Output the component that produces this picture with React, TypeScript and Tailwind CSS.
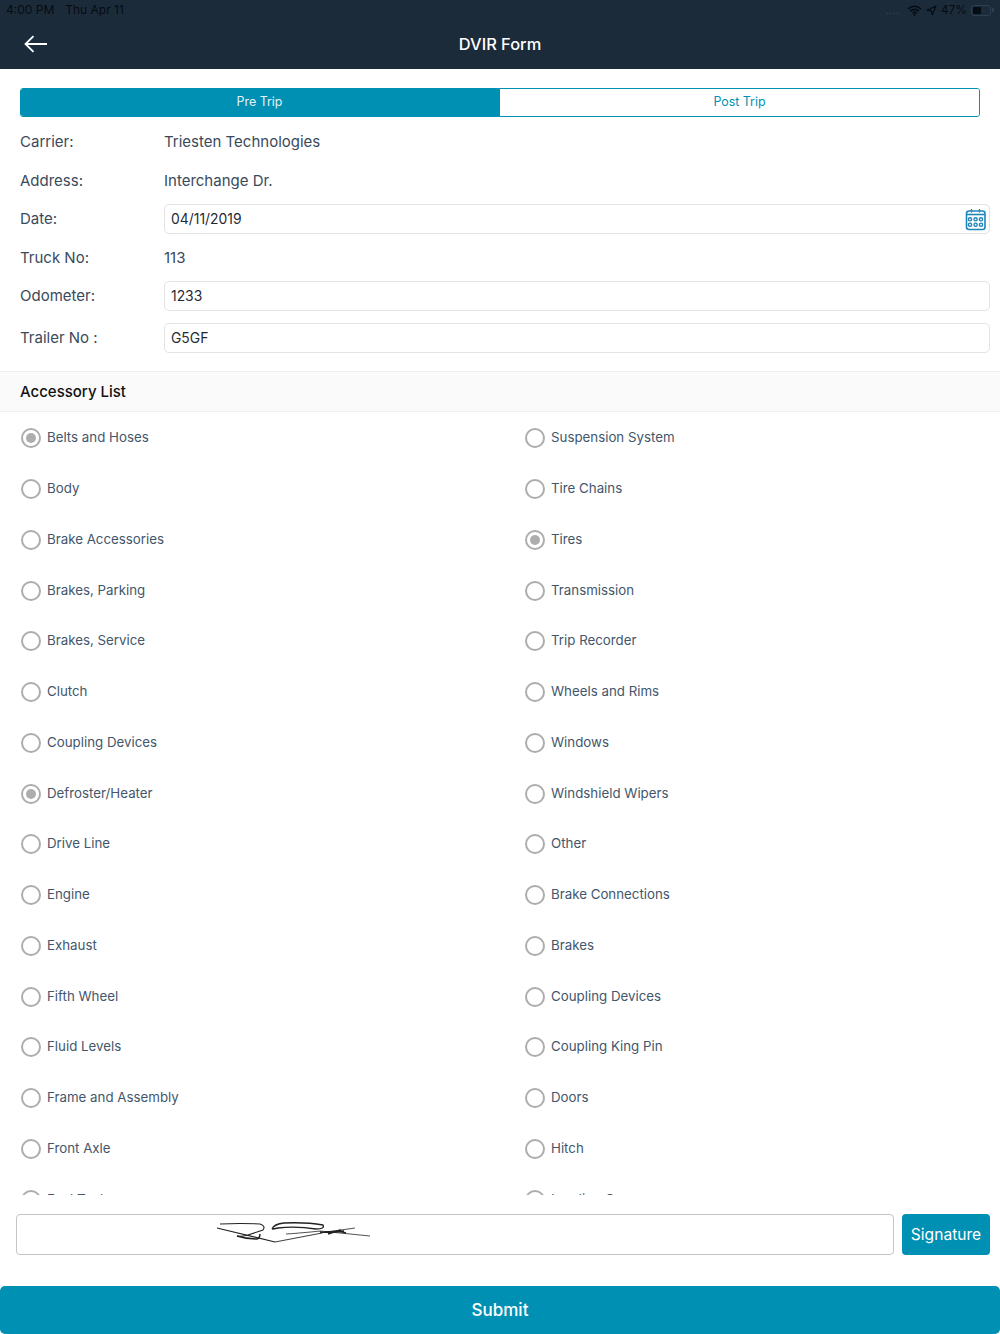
import React from 'react';

const leftItems = [
  'Belts and Hoses', 'Body', 'Brake Accessories', 'Brakes, Parking', 'Brakes, Service', 'Clutch',
  'Coupling Devices', 'Defroster/Heater', 'Drive Line', 'Engine', 'Exhaust', 'Fifth Wheel',
  'Fluid Levels', 'Frame and Assembly', 'Front Axle', 'Fuel Tanks',
];
const rightItems = [
  'Suspension System', 'Tire Chains', 'Tires', 'Transmission', 'Trip Recorder', 'Wheels and Rims',
  'Windows', 'Windshield Wipers', 'Other', 'Brake Connections', 'Brakes', 'Coupling Devices',
  'Coupling King Pin', 'Doors', 'Hitch', 'Landing Gear',
];
const checked = ['Belts and Hoses', 'Tires', 'Defroster/Heater'];

const Radio: React.FC<{ label: string }> = ({ label }) => (
  <div className="h-[50.75px] flex items-center">
    <span className="w-[20px] h-[20px] rounded-full border-2 border-[#adadad] flex items-center justify-center shrink-0">
      {checked.includes(label) && <span className="w-[10px] h-[10px] rounded-full bg-[#adadad]" />}
    </span>
    <span className="ml-[6.5px] text-[13.3px] text-[#43566b]">{label}</span>
  </div>
);

const StatusBar = () => (
  <div className="h-[20px] flex items-center justify-between pl-[6px] pr-[6px] text-[12px] text-[#050c13]">
    <div className="flex gap-[11px]">
      <span>4:00 PM</span>
      <span>Thu Apr 11</span>
    </div>
    <div className="flex items-center">
      <span className="w-[18px] text-[9px] tracking-[1px] text-[#3a4a5a] leading-none">....</span>
      <svg width="15" height="11" viewBox="0 0 15 11" className="ml-[3px]">
        <path d="M1 4a9 9 0 0 1 13 0M3.2 6.2a6 6 0 0 1 8.6 0M5.4 8.3a3 3 0 0 1 4.2 0" fill="none" stroke="#050c13" strokeWidth="1.6" />
        <circle cx="7.5" cy="9.8" r="1" fill="#050c13" />
      </svg>
      <svg width="11" height="11" viewBox="0 0 11 11" className="ml-[4px]">
        <path d="M10 1 1 5.2l4.4.6.8 4.2z" fill="none" stroke="#050c13" strokeWidth="1.2" strokeLinejoin="round" />
      </svg>
      <span className="ml-[4px]">47%</span>
      <div className="ml-[4px] flex items-center">
        <div className="w-[20px] h-[11px] rounded-[3px] border border-[#2f3f4f] p-[1px]">
          <div className="h-full w-[8px] bg-[#050c13] rounded-[1px]" />
        </div>
        <div className="w-[2px] h-[4px] ml-[1px] bg-[#2f3f4f] rounded-r-[1px]" />
      </div>
    </div>
  </div>
);

const CalendarIcon = () => (
  <svg width="22" height="22" viewBox="0 0 22 22" className="absolute right-[3px] top-[4px]">
    <rect x="2.5" y="2" width="18.5" height="18.5" rx="2.5" fill="none" stroke="#1f86bb" strokeWidth="1.6" />
    <path d="M2.5 5.5h18.5" stroke="#1f86bb" strokeWidth="1.6" />
    <path d="M7.5 0v3.5M15.5 0v3.5" stroke="#1f86bb" strokeWidth="1.3" />
    {[6, 11.6, 17].map((cx) =>
      [10.3, 15.7].map((cy) => <circle key={`${cx}-${cy}`} cx={cx} cy={cy} r="1.6" fill="none" stroke="#1f86bb" strokeWidth="1.4" />)
    )}
  </svg>
);

const Signature = () => (
  <svg width="156" height="26" viewBox="0 0 156 26" className="ml-[199px]">
    <g fill="none" stroke="#222" strokeWidth="1.1">
      <path d="M1 6 59 20" />
      <path d="M4 2Q24 1 44 2Q50 4 47 8L32 13Q25 15 21 14" />
      <path d="M21 14Q30 17 41 17Q44 16 44 12" strokeWidth="1.5" />
      <path d="M59 20 106 11" stroke="#444" />
      <path d="M56 7Q58 2 68 1Q90 0 107 3Q109 7 100 7Q80 4 62 6Q58 7 56 7" strokeWidth="1.3" />
      <path d="M70 12Q85 11 104 9L154 14" stroke="#555" />
      <path d="M104 11 139 6" stroke="#555" />
      <path d="M104 10Q115 11 125 8M108 10 128 9M112 12Q122 8 130 11" strokeWidth="1.4" />
    </g>
  </svg>
);

const App: React.FC = () => {
  return (
    <div className="w-[1000px] h-[1334px] flex flex-col bg-white font-['Inter',sans-serif] overflow-hidden">
      <header className="h-[69px] bg-[#1c2b3a] shrink-0">
        <StatusBar />
        <div className="h-[49px] relative flex items-center justify-center pb-[1px]">
          <svg width="24" height="18" viewBox="0 0 24 18" className="absolute left-[24px] top-[15px]">
            <path d="M23 9H1.5M9.5 1.2 1.5 9l8 7.8" fill="none" stroke="#fff" strokeWidth="1.8" />
          </svg>
          <h1 className="text-[16.4px] font-medium text-white">DVIR Form</h1>
        </div>
      </header>

      <div className="px-[20px] pt-[19px] shrink-0">
        <div className="grid grid-cols-2 h-[29px] rounded-[3px] border border-[#0090b3] overflow-hidden text-[12.4px]">
          <div className="bg-[#0090b3] text-[#e4f3f7] flex items-center justify-center pr-[2px]">Pre Trip</div>
          <div className="bg-white text-[#0090b3] flex items-center justify-center">Post Trip</div>
        </div>
      </div>

      <div className="pl-[20px] pr-[10px] pt-[6px] shrink-0 text-[15px] text-[#3a4a5a]">
        <div className="flex items-center h-[38.5px]">
          <span className="w-[144px]">Carrier:</span>
          <span>Triesten Technologies</span>
        </div>
        <div className="flex items-center h-[38.5px]">
          <span className="w-[144px]">Address:</span>
          <span>Interchange Dr.</span>
        </div>
        <div className="flex items-center h-[38.5px]">
          <span className="w-[144px]">Date:</span>
          <div className="flex-1 h-[30px] relative border border-[#e3e3e3] rounded-[5px] px-[6px] flex items-center text-[13.9px] text-[#1f2a36]">
            04/11/2019
            <CalendarIcon />
          </div>
        </div>
        <div className="flex items-center h-[38.5px]">
          <span className="w-[144px]">Truck No:</span>
          <span>113</span>
        </div>
        <div className="flex items-center h-[38.5px]">
          <span className="w-[144px]">Odometer:</span>
          <div className="flex-1 h-[30px] border border-[#e3e3e3] rounded-[5px] px-[6px] flex items-center text-[13.9px] text-[#1f2a36]">1233</div>
        </div>
        <div className="flex items-center h-[42px] mt-[1.5px]">
          <span className="w-[144px]">Trailer No :</span>
          <div className="flex-1 h-[30px] border border-[#e3e3e3] rounded-[5px] px-[6px] flex items-center text-[13.9px] text-[#1f2a36]">G5GF</div>
        </div>
      </div>

      <div className="h-[41px] mt-[12px] pt-[1px] shrink-0 bg-[#fafafa] border-y border-[#efefef] pl-[20px] flex items-center text-[15px] font-medium text-[#111]">
        Accessory List
      </div>

      <div className="h-[783px] shrink-0 overflow-hidden pl-[20.5px] pt-[1px] grid grid-cols-[504px_1fr] content-start">
        <div>{leftItems.map((l) => <Radio key={l} label={l} />)}</div>
        <div>{rightItems.map((l, i) => <Radio key={i} label={l} />)}</div>
      </div>

      <div className="flex items-center gap-[8px] pl-[16px] pr-[10px] mt-[19px] h-[41px] shrink-0">
        <div className="w-[878px] h-full border border-[#c4c4c4] rounded-[4px] flex items-center">
          <Signature />
        </div>
        <button className="flex-1 h-full bg-[#0090b3] rounded-[4px] text-white text-[15.6px]">Signature</button>
      </div>

      <button className="mt-[31px] h-[48px] pt-[1px] shrink-0 bg-[#0090b3] rounded-[5px] text-white text-[17px] font-medium">Submit</button>
    </div>
  );
};

export default App;
